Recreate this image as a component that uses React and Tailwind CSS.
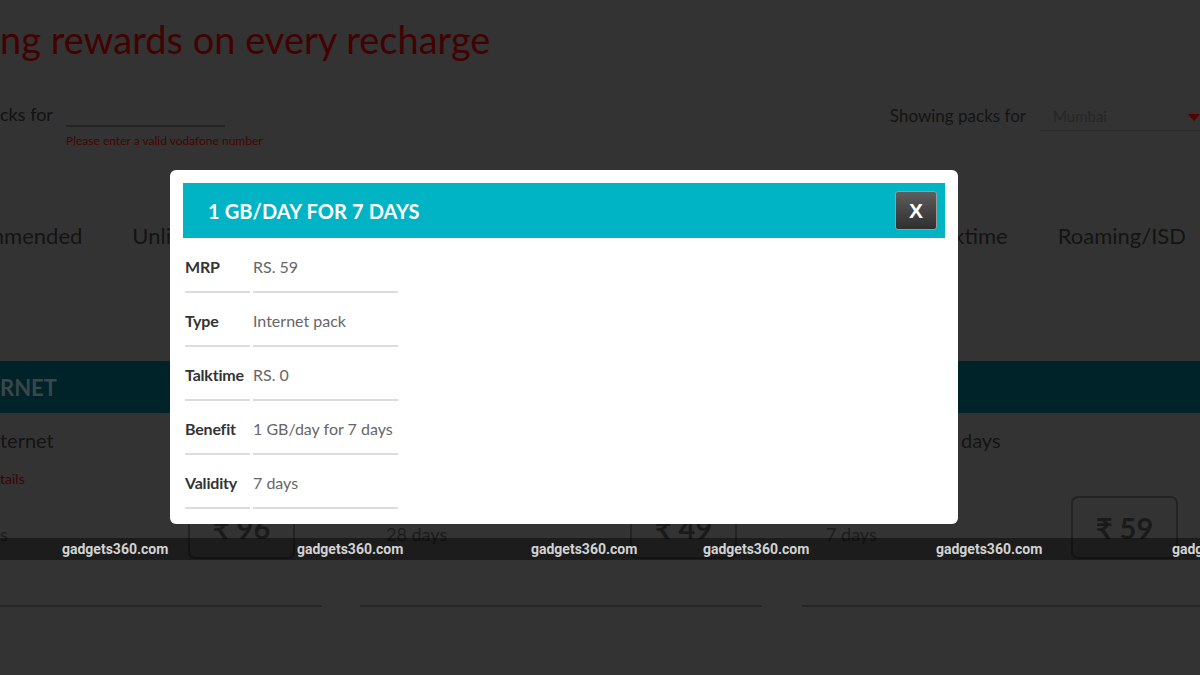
import { useState } from 'react'

const details = [
  { label: 'MRP', value: 'RS. 59' },
  { label: 'Type', value: 'Internet pack' },
  { label: 'Talktime', value: 'RS. 0' },
  { label: 'Benefit', value: '1 GB/day for 7 days' },
  { label: 'Validity', value: '7 days' },
]

const marks = [62, 297, 531, 703, 936, 1172]

const PackModal = ({ onClose }) => (
  <div className="absolute left-[170px] top-[170px] h-[354px] w-[788px] rounded-[6px] bg-white pt-[13px]">
    {/* titel */}
    <div className="mx-[13px] flex h-[55px] items-center justify-between bg-[#00b4c6] pl-[25px] pr-[8px]">
      <h2 className="text-[20px] font-bold tracking-[0.1px] text-white">1 GB/DAY FOR 7 DAYS</h2>
      <button onClick={onClose}
        className="flex h-[39px] w-[42px] items-center justify-center rounded-[3px] border border-[#9a9a9a] bg-gradient-to-b from-[#5e5e5e] to-[#2f2f2f] text-[21px] font-bold text-white"
        style={{ fontFamily: '"Liberation Sans", Arial, sans-serif' }}>
        X
      </button>
    </div>

    {/* detail paket */}
    <div className="ml-[15px] mt-[1px] grid w-[213px] grid-cols-[65px_145px] gap-x-[3px]">
      {details.map((d) => (
        <div key={d.label} className="contents">
          <div className="flex h-[54px] items-center border-b-2 border-[#dcdcdc] pt-[3px] text-[16px] font-bold tracking-[-0.2px] text-[#333]">{d.label}</div>
          <div className="flex h-[54px] items-center border-b-2 border-[#dcdcdc] pt-[3px] text-[16px] text-[#666]">{d.value}</div>
        </div>
      ))}
    </div>
  </div>
)

const PriceBox = ({ amount }) => (
  <div className="flex h-[63px] w-[107px] items-center justify-center rounded-[7px] border-2 border-[#232323] text-[29px] font-bold text-[#1a1a1a]"
    style={{ fontFamily: 'Lato, "DejaVu Sans", sans-serif' }}>
    ₹ {amount}
  </div>
)

const App = () => {
  const [open, setOpen] = useState(true)

  return (
    <div className="relative h-[675px] w-[1200px] overflow-hidden bg-[#333333]" style={{ fontFamily: 'Lato, "Open Sans", sans-serif' }}>
      {/* judul halaman */}
      <h1 className="pt-[15px] text-[38px] leading-[48px] text-[#420202]">ng rewards on every recharge</h1>

      {/* nomor + lokasi */}
      <div className="mt-[39px] flex items-start">
        <span className="w-[66px] text-[18px] leading-[24px] text-[#121212]">cks for</span>
        <div>
          <div className="h-[25px] w-[159px] border-b-2 border-[#242424]" />
          <p className="mt-[6px] text-[12px] leading-[16px] text-[#470404]">Please enter a valid vodafone number</p>
        </div>
        <div className="ml-auto mt-[2px] flex items-start">
          <span className="text-[17px] leading-[24px] text-[#141414]">Showing packs for</span>
          <div className="relative ml-[14px] h-[27px] w-[160px] border-b border-[#2b2b2b] pl-[13px] text-[15px] leading-[24px] text-[#262626]">
            Mumbai
            <span className="absolute right-0 top-[10px] h-0 w-0 border-x-[6px] border-t-[7px] border-x-transparent border-t-[#560000]" />
          </div>
        </div>
      </div>

      {/* tab kategori */}
      <div className="mt-[72px] flex justify-between pr-[14px] text-[22px] leading-[30px] text-[#141414]">
        <div className="flex gap-[50px]">
          <span className="-ml-[14px]">mmended</span>
          <span>Unlimited</span>
          <span>Internet</span>
        </div>
        <div className="flex gap-[50px]">
          <span>Talktime</span>
          <span>Roaming/ISD</span>
        </div>
      </div>

      {/* kategori internet */}
      <div className="mt-[110px] flex h-[52px] items-center bg-[#00232a] text-[22px] font-bold text-[#3a4647]">RNET</div>

      <div className="flex">
        <div className="w-[322px] border-b-2 border-[#262626] pb-[46px]">
          <p className="pt-[14px] text-[20px] leading-[26px] text-[#141414]">ternet</p>
          <p className="mt-[17px] text-[14px] leading-[18px] text-[#400303]">tails</p>
          <div className="mt-[8px] flex items-end">
            <span className="mb-[13px] w-[188px] text-[18px] leading-[24px] text-[#1c1c1c]">s</span>
            <PriceBox amount="96" />
          </div>
        </div>
        <div className="ml-[38px] w-[402px] border-b-2 border-[#262626] pb-[46px] pl-[26px]">
          <p className="pt-[14px] text-[20px] leading-[26px] text-[#141414]">2 GB/day for 28 days</p>
          <p className="mt-[17px] text-[14px] leading-[18px] text-[#400303]">View details</p>
          <div className="mt-[8px] flex items-end">
            <span className="mb-[13px] w-[244px] text-[18px] leading-[24px] text-[#1c1c1c]">28 days</span>
            <PriceBox amount="49" />
          </div>
        </div>
        <div className="ml-[40px] w-[398px] border-b-2 border-[#262626] pb-[46px] pl-[24px]">
          <p className="pt-[14px] text-[20px] leading-[26px] text-[#141414]">1 GB/day for 7 days</p>
          <p className="mt-[17px] text-[14px] leading-[18px] text-[#400303]">View details</p>
          <div className="mt-[8px] flex items-end">
            <span className="mb-[13px] w-[245px] text-[18px] leading-[24px] text-[#1c1c1c]">7 days</span>
            <PriceBox amount="59" />
          </div>
        </div>
      </div>

      {open && <PackModal onClose={() => setOpen(false)} />}

      {/* watermark */}
      <div className="absolute left-0 top-[538px] h-[22px] w-full bg-black/45">
        {marks.map((x) => (
          <span key={x} className="absolute top-0 text-[14px] font-bold leading-[22px] text-[#d2d2d2]"
            style={{ left: x, fontFamily: 'Roboto, "Liberation Sans", sans-serif' }}>
            gadgets360.com
          </span>
        ))}
      </div>
    </div>
  )
}

export default App
